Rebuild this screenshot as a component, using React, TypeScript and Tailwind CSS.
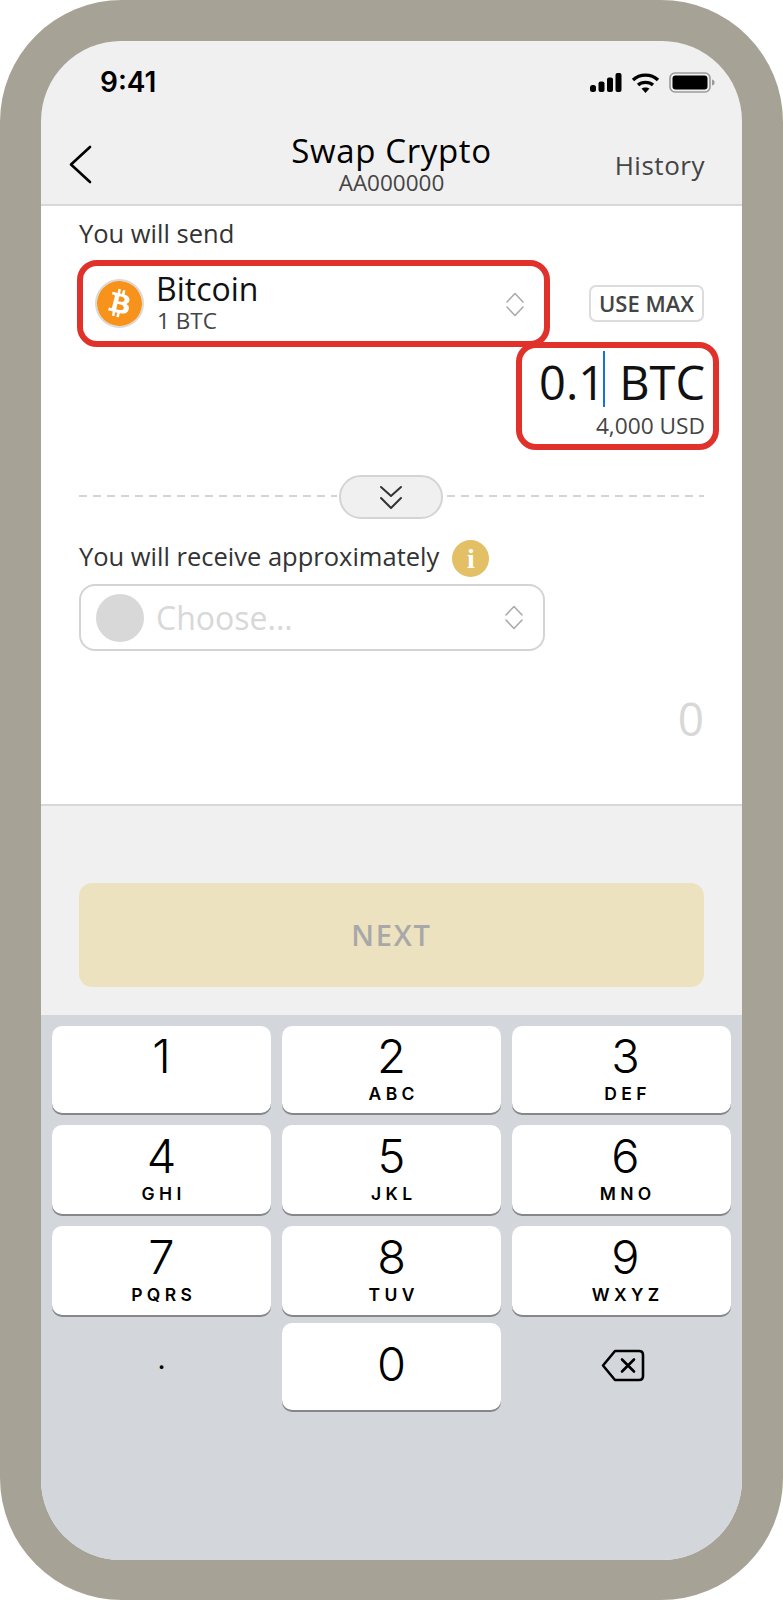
import React from 'react';
import { SiBitcoin } from 'react-icons/si';

const uiFont = "font-['Open_Sans','Noto_Sans',sans-serif]";
const keyFont = "font-['Inter','Liberation_Sans',sans-serif]";

type KeyProps = {
  digit: string;
  letters?: string;
  className?: string;
};

const dashes = 'h-[2px] flex-1 bg-[repeating-linear-gradient(90deg,#d4d4d4_0,#d4d4d4_8px,transparent_8px,transparent_14px)]';

const UpDown = () => (
  <svg width="18" height="25" viewBox="0 0 18 25" fill="none" stroke="#ababab" strokeWidth="1.6" strokeLinecap="round" strokeLinejoin="round">
    <path d="M1 10 L9 1.5 L17 10" />
    <path d="M1 15 L9 23.5 L17 15" />
  </svg>
);

const StatusIcons = () => (
  <div className="flex items-center gap-[9px]">
    <svg width="32" height="19" viewBox="0 0 32 19" fill="#000">
      <rect x="0" y="12" width="6" height="7" rx="2.5" />
      <rect x="8.5" y="8.5" width="6" height="10.5" rx="2" />
      <rect x="17" y="4.5" width="6" height="14.5" rx="2" />
      <rect x="25.5" y="0" width="6" height="19" rx="2" />
    </svg>
    <svg width="29" height="20" viewBox="0 0 29 20" fill="none" stroke="#000" strokeWidth="3.4">
      <path d="M2 7 C9 0.5 20 0.5 27 7" />
      <path d="M7 12 C11 8.5 18 8.5 22 12" />
      <path d="M14.5 20 L10.5 15.5 C12.5 14 16.5 14 18.5 15.5 Z" fill="#000" stroke="none" />
    </svg>
    <svg width="46" height="21" viewBox="0 0 46 21" fill="none">
      <rect x="1" y="1" width="40" height="19" rx="5" stroke="#9a9a9a" strokeWidth="1.6" />
      <rect x="3.5" y="3.5" width="35" height="14" rx="3" fill="#000" />
      <path d="M43 7.5 C45 8 45.6 9 45.6 10.5 C45.6 12 45 13 43 13.5 Z" fill="#9a9a9a" />
    </svg>
  </div>
);

const NumKey = ({ digit, letters, className }: KeyProps) => (
  <div className={`flex flex-col items-center rounded-[10px] bg-white text-black shadow-[0_2px_0_#85878b] ${className}`}>
    <span className="text-[47px] leading-[56px] font-light">{digit}</span>
    {letters && <span className="pl-[0.25em] text-[17.5px] leading-[20px] font-semibold tracking-[0.25em]">{letters}</span>}
  </div>
);

const App = () => {
  return (
    <div className={`${uiFont} h-[1600px] w-[783px] bg-white`}>
      <div className="h-full rounded-[122px] bg-[#a6a295] pt-[41px] pr-[41px] pb-[40px] pl-[41px]">
        <div className="flex h-full flex-col overflow-hidden rounded-[80px] bg-[#f0f0f0]">
          {/* status bar + title */}
          <header className="h-[165px] shrink-0 border-b-2 border-[#d8d8d8]">
            <div className={`${keyFont} flex items-center justify-between pt-[28px] pr-[27px] pl-[59px]`}>
              <span className="text-[28px] leading-[27px] font-semibold text-black">9:41</span>
              <StatusIcons />
            </div>
            <div className="mt-[36px] grid grid-cols-[1fr_auto_1fr] items-start px-[37px]">
              <svg className="mt-[13px] ml-[-9px]" width="23" height="39" viewBox="0 0 23 39" fill="none" stroke="#000" strokeWidth="2.6" strokeLinecap="round" strokeLinejoin="round">
                <path d="M21 2 L2 19.5 L21 37" />
              </svg>
              <div className="flex flex-col items-center">
                <span className="text-[33px] leading-[38px] tracking-[0.02em] text-black">Swap Crypto</span>
                <span className="text-[22.5px] leading-[26px] text-[#444]">AA000000</span>
              </div>
              <span className="mt-[16px] text-right text-[26px] leading-[34px] tracking-[0.02em] text-[#444]">History</span>
            </div>
          </header>

          {/* form */}
          <section className="h-[600px] shrink-0 border-b-2 border-[#d8d8d8] bg-white px-[38px]">
            <p className="mt-[11px] text-[25.5px] leading-[32px] text-[#333]">You will send</p>
            <div className="mt-[11px] flex items-center justify-between">
              <div className="ml-[-2px] flex h-[87px] w-[473px] items-center rounded-[20px] border-[6px] border-[#e0322a] pr-[20px] pl-[12px]">
                <span className="flex size-[49px] items-center justify-center rounded-full border-2 border-[#d9d9d9] bg-white">
                  <SiBitcoin className="size-[45px] text-[#f7931a]" />
                </span>
                <div className="mt-[-3px] ml-[12px] flex flex-1 flex-col">
                  <span className="text-[32px] leading-[36px] text-[#111]">Bitcoin</span>
                  <span className="ml-[1px] text-[22.5px] leading-[27px] text-[#444]">1 BTC</span>
                </div>
                <span className="mt-[2px]">
                  <UpDown />
                </span>
              </div>
              <span className="flex h-[37px] w-[115px] items-center justify-center rounded-[7px] border-2 border-[#dcdcdc] text-[22px] font-semibold text-[#444]">USE MAX</span>
            </div>
            <div className="mt-[-5px] mr-[-15px] flex justify-end">
              <div className="flex h-[108px] w-[203px] flex-col items-end rounded-[20px] border-[6px] border-[#e0322a] bg-white pt-[9px] pr-[8px]">
                <div className="flex items-center text-[47px] leading-[50px] text-[#111]">
                  <span>0.1</span>
                  <span className="mt-[-6px] ml-[-2px] h-[56px] w-[2px] bg-[#1a6fe0]" />
                  <span className="ml-[14px]">BTC</span>
                </div>
                <span className="mt-[5px] text-[22.7px] leading-[28px] text-[#444]">4,000 USD</span>
              </div>
            </div>

            <div className="mt-[25px] flex items-center">
              <div className={`${dashes} mt-[-3px]`} />
              <div className="mx-[2px] mr-[4px] flex h-[44px] w-[104px] items-center justify-center rounded-full border-2 border-[#d4d4d4] bg-[#f0f0f0]">
                <svg width="24" height="25" viewBox="0 0 24 25" fill="none" stroke="#333" strokeWidth="2" strokeLinecap="round" strokeLinejoin="round">
                  <path d="M2 2 L12 11 L22 2" />
                  <path d="M2 13 L12 23 L22 13" />
                </svg>
              </div>
              <div className={`${dashes} mt-[-3px]`} />
            </div>

            <div className="mt-[19px] flex h-[37px] items-center">
              <span className="text-[25.5px] leading-[37px] text-[#333]">You will receive approximately</span>
              <span className="mt-[4px] ml-[13px] flex size-[37px] items-center justify-center rounded-full bg-[#e3bf66] font-['Liberation_Serif',serif] text-[28px] leading-none font-bold text-white">i</span>
            </div>
            <div className="mt-[9px] flex h-[67px] w-[466px] items-center rounded-[16px] border-2 border-[#d4d4d4] pr-[20px] pl-[15px]">
              <span className="size-[48px] rounded-full bg-[#d8d8d8]" />
              <span className="ml-[12px] flex-1 text-[32px] leading-[36px] text-[#d8d8d8]">Choose...</span>
              <UpDown />
            </div>
            <p className="mt-[39px] text-right text-[46px] leading-[56px] font-medium text-[#d8d8d8]">0</p>
          </section>

          {/* action */}
          <div className="h-[209px] shrink-0 px-[38px] pt-[77px]">
            <button className="flex h-[104px] w-full items-center justify-center rounded-[13px] bg-[#ece2bf] text-[29px] font-semibold tracking-[0.06em] text-[#a8a8a8]">NEXT</button>
          </div>

          {/* keypad */}
          <div className={`${keyFont} flex-1 bg-[#d3d6db] pt-[11px] pr-[11px] pl-[11px]`}>
            <div className="grid grid-cols-3 gap-x-[11px] gap-y-[12px]">
              <NumKey digit="1" className="h-[87px] pt-[2px]" />
              <NumKey digit="2" letters="ABC" className="h-[87px] pt-[2px]" />
              <NumKey digit="3" letters="DEF" className="h-[87px] pt-[2px] pl-[8px]" />
              <NumKey digit="4" letters="GHI" className="h-[89px] pt-[3px]" />
              <NumKey digit="5" letters="JKL" className="h-[89px] pt-[3px]" />
              <NumKey digit="6" letters="MNO" className="h-[89px] pt-[3px] pl-[8px]" />
              <NumKey digit="7" letters="PQRS" className="h-[89px] pt-[3px]" />
              <NumKey digit="8" letters="TUV" className="h-[89px] pt-[3px]" />
              <NumKey digit="9" letters="WXYZ" className="h-[89px] pt-[3px] pl-[8px]" />
              <div className="mt-[-4px] flex h-[87px] items-center justify-center text-[28px] text-black">·</div>
              <NumKey digit="0" className="mt-[-4px] h-[87px] pt-[13px]" />
              <div className="mt-[-4px] flex h-[87px] items-center justify-center pb-[2px] pl-[2px]">
                <svg width="44" height="33" viewBox="0 0 44 33" fill="none" stroke="#000" strokeWidth="2.6" strokeLinecap="round" strokeLinejoin="round">
                  <path d="M14 2 H38 Q42 2 42 6 V27 Q42 31 38 31 H14 L2 16.5 Z" />
                  <path d="M21 10.5 L33 22.5 M33 10.5 L21 22.5" />
                </svg>
              </div>
            </div>
          </div>
        </div>
      </div>
    </div>
  );
};

export default App;
